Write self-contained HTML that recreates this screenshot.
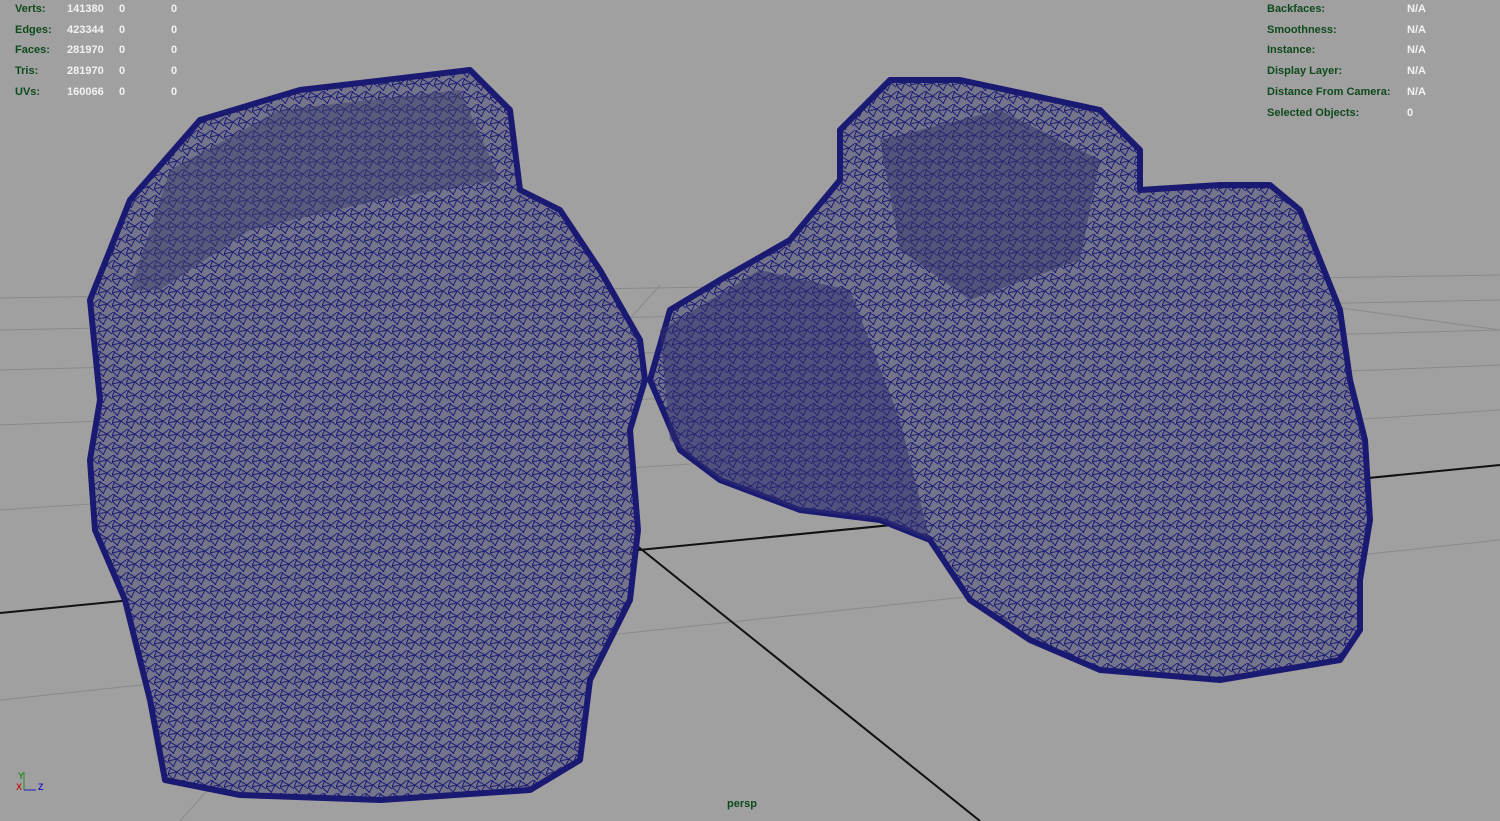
<!DOCTYPE html>
<html><head><meta charset="utf-8"><style>
html,body{margin:0;padding:0;}
body{width:1500px;height:821px;overflow:hidden;background:#a0a0a0;position:relative;font-family:"Liberation Sans",sans-serif;}
.hud{position:absolute;font-size:11px;font-weight:bold;}
.g{color:#0f4a1c;}
.w{color:#f2f2f2;}
</style></head><body>
<svg width="1500" height="821" style="position:absolute;left:0;top:0">
<defs>
<pattern id="m" width="14" height="13" patternUnits="userSpaceOnUse">
<rect width="14" height="13" fill="#74758a"/>
<path d="M0 0L9 5L14 1M0 7L6 13M9 5L5 13M9 5L14 9M0 7L9 5M3 0L0 7" stroke="#1c1c78" stroke-width="1" fill="none"/>
</pattern>
</defs>
<g stroke="#8a8a8a" stroke-width="1">
<line x1="0" y1="298" x2="1500" y2="275"/>
<line x1="0" y1="330" x2="1500" y2="300"/>
<line x1="0" y1="370" x2="1500" y2="330"/>
<line x1="0" y1="425" x2="1500" y2="365"/>
<line x1="0" y1="510" x2="1500" y2="410"/>
<line x1="0" y1="700" x2="1500" y2="540"/>
<line x1="180" y1="821" x2="660" y2="285"/>
<line x1="1500" y1="330" x2="1140" y2="280"/>
</g>
<line x1="0" y1="613" x2="1500" y2="465" stroke="#111" stroke-width="2"/>
<line x1="636" y1="545" x2="980" y2="821" stroke="#111" stroke-width="2"/>
<path d="M90,300 L130,200 L200,120 L300,90 L470,70 L510,110 L520,190 L560,210 L600,270 L640,340 L645,380 L630,430 L638,530 L630,600 L590,680 L580,760 L530,790 L380,800 L240,795 L165,780 L150,700 L125,600 L95,530 L90,460 L100,400 Z" fill="url(#m)" stroke="#1a1a72" stroke-width="6" stroke-linejoin="round"/>
<path d="M130,290 L170,170 L280,110 L460,90 L500,180 L380,200 L250,230 L160,290 Z" fill="#3e3f6e" opacity=".5"/>
<path d="M650,380 L670,310 L720,280 L790,240 L840,180 L840,130 L890,80 L960,80 L1100,110 L1140,150 L1140,190 L1220,185 L1270,185 L1300,210 L1320,260 L1340,310 L1350,380 L1365,440 L1370,520 L1360,580 L1360,630 L1340,660 L1220,680 L1100,670 L1030,640 L970,600 L930,540 L880,520 L800,510 L720,480 L680,450 Z" fill="url(#m)" stroke="#1a1a72" stroke-width="6" stroke-linejoin="round"/>
<path d="M660,330 L760,270 L850,290 L900,420 L930,540 L880,520 L800,510 L720,480 L670,440 Z" fill="#2d2e70" opacity=".5"/>
<path d="M880,140 L1000,110 L1100,160 L1080,260 L970,300 L900,250 Z" fill="#33346c" opacity=".5"/>
<g font-family="Liberation Sans" font-size="9" font-weight="bold">
<text x="18" y="779" fill="#2a8a2a">Y</text>
<text x="16" y="790" fill="#c02020">X</text>
<text x="38" y="790" fill="#2020c0">Z</text>
</g>
<line x1="24" y1="790" x2="24" y2="772" stroke="#2a8a2a"/>
<line x1="24" y1="790" x2="36" y2="790" stroke="#2020c0"/>
</svg>
<div class="hud g" style="left:15px;top:-1px;line-height:20.7px">Verts:<br>Edges:<br>Faces:<br>Tris:<br>UVs:</div>
<div class="hud w" style="left:67px;top:-1px;line-height:20.7px">141380<br>423344<br>281970<br>281970<br>160066</div>
<div class="hud w" style="left:119px;top:-1px;line-height:20.7px">0<br>0<br>0<br>0<br>0</div>
<div class="hud w" style="left:171px;top:-1px;line-height:20.7px">0<br>0<br>0<br>0<br>0</div>
<div class="hud g" style="left:1267px;top:-1px;line-height:20.7px">Backfaces:<br>Smoothness:<br>Instance:<br>Display Layer:<br>Distance From Camera:<br>Selected Objects:</div>
<div class="hud w" style="left:1407px;top:-1px;line-height:20.7px">N/A<br>N/A<br>N/A<br>N/A<br>N/A<br>0</div>
<div class="hud g" style="left:727px;top:798px">persp</div>
</body></html>
